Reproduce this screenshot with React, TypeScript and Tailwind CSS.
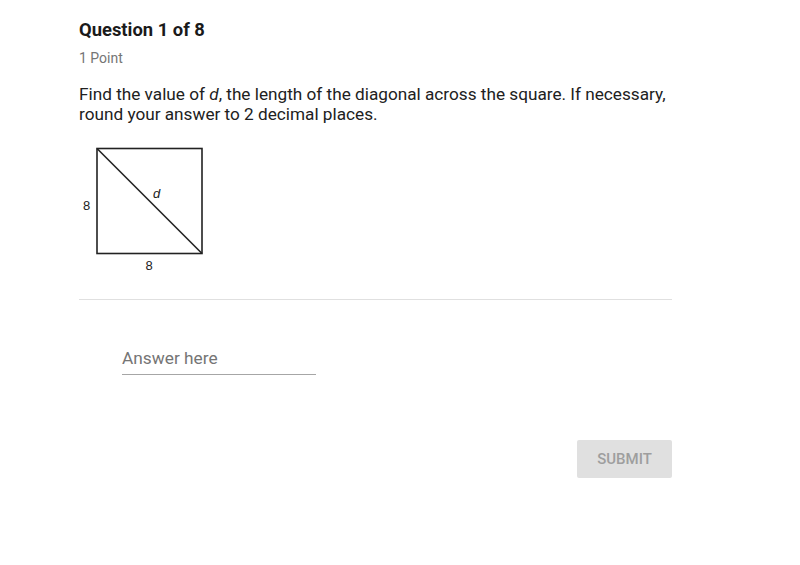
import React from "react";

export default function App() {
  return (
    <div className="w-[800px] h-[565px] bg-white" style={{ fontFamily: "Roboto, 'Liberation Sans', sans-serif" }}>
      <div className="pl-[79px] pt-[18px] w-[672px]">
        <h1 className="text-[18.4px] leading-[24px] font-bold text-[#1a1a1a]">Question 1 of 8</h1>
        <div className="mt-[6px] text-[14px] leading-[20px] text-[#757575]">1 Point</div>
        <p className="mt-[17px] text-[17.2px] leading-[19.5px] text-[#212121]">
          Find the value of <i>d</i>, the length of the diagonal across the square. If necessary, round your answer to 2 decimal places.
        </p>
        <div className="mt-[16px]">
          <svg width="140" height="135" viewBox="0 0 140 135" style={{ fontFamily: "'Liberation Sans', Arial, sans-serif" }}>
            <rect x="18" y="8.5" width="105" height="105" fill="none" stroke="#222" strokeWidth="1.6" />
            <line x1="18" y1="8.5" x2="123" y2="113.5" stroke="#222" strokeWidth="1.6" />
            <text x="7.7" y="69.5" fontSize="13" textAnchor="middle" fill="#222">8</text>
            <text x="70" y="130.2" fontSize="13" textAnchor="middle" fill="#222">8</text>
            <text x="74" y="57.5" fontSize="13" fontStyle="italic" fill="#222">d</text>
          </svg>
        </div>
        <div className="mt-[24px] h-px bg-[#e0e0e0]" />
        <div className="mt-[46px] ml-[43px] w-[194px] pb-[4px] border-b-[1.5px] border-[#a6a6a6] text-[17.3px] leading-[24px] text-[#757575]">
          Answer here
        </div>
        <div className="mt-[65px] flex justify-end">
          <button className="w-[95px] h-[38px] rounded-[2px] bg-[#e0e0e0] text-[15px] font-medium text-[#9e9e9e]">
            SUBMIT
          </button>
        </div>
      </div>
    </div>
  );
}
